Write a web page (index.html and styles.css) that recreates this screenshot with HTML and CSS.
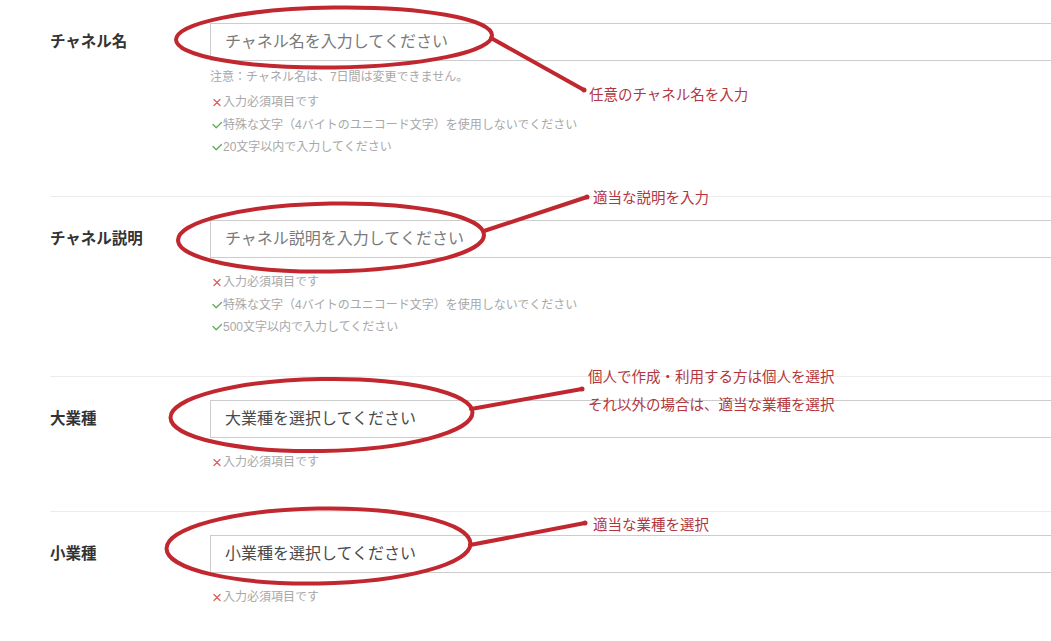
FILE: index.html
```html
<!DOCTYPE html>
<html lang="ja">
<head>
    <meta charset="UTF-8" />
    <meta name="viewport" content="width=device-width, initial-scale=1" />
    <title>チャネル作成</title>
    <link rel="stylesheet" href="styles.css">
</head>
<body>
    <div class="page">
        <form class="channel-form">
            <div class="field">
                <label class="field-label" for="channel-name">チャネル名</label>
                <div class="field-body">
                    <input type="text" id="channel-name" class="text-input" placeholder="チャネル名を入力してください" />
                    <p class="field-note">注意：チャネル名は、7日間は変更できません。</p>
                    <ul class="checks">
                        <li class="ng"><svg class="mark" viewBox="0 0 10 10"><path d="M2 2.5l6 6M8 2.5l-6 6"/></svg>入力必須項目です</li>
                        <li class="ok"><svg class="mark" viewBox="0 0 10 10"><path d="M1 4.5l3.2 3.3L9.5 2.5"/></svg>特殊な文字（4バイトのユニコード文字）を使用しないでください</li>
                        <li class="ok"><svg class="mark" viewBox="0 0 10 10"><path d="M1 4.5l3.2 3.3L9.5 2.5"/></svg>20文字以内で入力してください</li>
                    </ul>
                </div>
            </div>
            <div class="field">
                <label class="field-label" for="channel-desc">チャネル説明</label>
                <div class="field-body">
                    <input type="text" id="channel-desc" class="text-input" placeholder="チャネル説明を入力してください" />
                    <ul class="checks">
                        <li class="ng"><svg class="mark" viewBox="0 0 10 10"><path d="M2 2.5l6 6M8 2.5l-6 6"/></svg>入力必須項目です</li>
                        <li class="ok"><svg class="mark" viewBox="0 0 10 10"><path d="M1 4.5l3.2 3.3L9.5 2.5"/></svg>特殊な文字（4バイトのユニコード文字）を使用しないでください</li>
                        <li class="ok"><svg class="mark" viewBox="0 0 10 10"><path d="M1 4.5l3.2 3.3L9.5 2.5"/></svg>500文字以内で入力してください</li>
                    </ul>
                </div>
            </div>
            <div class="field">
                <label class="field-label">大業種</label>
                <div class="field-body">
                    <div class="select-box">大業種を選択してください</div>
                    <ul class="checks">
                        <li class="ng"><svg class="mark" viewBox="0 0 10 10"><path d="M2 2.5l6 6M8 2.5l-6 6"/></svg>入力必須項目です</li>
                    </ul>
                </div>
            </div>
            <div class="field">
                <label class="field-label">小業種</label>
                <div class="field-body">
                    <div class="select-box">小業種を選択してください</div>
                    <ul class="checks">
                        <li class="ng"><svg class="mark" viewBox="0 0 10 10"><path d="M2 2.5l6 6M8 2.5l-6 6"/></svg>入力必須項目です</li>
                    </ul>
                </div>
            </div>
        </form>

        <!-- hand-drawn annotations on top of the form -->
        <div class="annotations">
            <svg class="marks" viewBox="0 0 1051 641" width="1051" height="641">
                <ellipse cx="334" cy="37.5" rx="158" ry="30" transform="rotate(-0.8 334 37.5)"/>
                <path d="M491 38 L584 90"/>
                <circle cx="584" cy="90" r="2.5"/>

                <ellipse cx="331" cy="237.5" rx="153" ry="34" transform="rotate(-1 331 237.5)"/>
                <path d="M484 231 L587 197"/>
                <circle cx="587" cy="197" r="2.5"/>

                <ellipse cx="321.5" cy="415" rx="151" ry="36" transform="rotate(-1 321.5 415)"/>
                <path d="M471 409 L582 389"/>
                <circle cx="582" cy="389" r="2.5"/>

                <ellipse cx="318.5" cy="546" rx="152" ry="37.5" transform="rotate(-1 318.5 546)"/>
                <path d="M470 545 L585 523"/>
                <circle cx="585" cy="523" r="2.5"/>
            </svg>
            <p class="callout callout-name">任意のチャネル名を入力</p>
            <p class="callout callout-desc">適当な説明を入力</p>
            <p class="callout callout-major">個人で作成・利用する方は個人を選択</p>
            <p class="callout callout-major-2">それ以外の場合は、適当な業種を選択</p>
            <p class="callout callout-minor">適当な業種を選択</p>
        </div>
    </div>
</body>
</html>
```

FILE: styles.css
```css
html, body {
    margin: 0;
    padding: 0;
}
body {
    font-family: "Liberation Sans", "Noto Sans CJK JP", sans-serif;
    background: #fff;
    color: #333;
    overflow: hidden;
}
.page {
    position: relative;
    padding-top: 23px;
    height: 618px;
}
.channel-form {
    margin-left: 50px;
    margin-right: -20px;
}
.field {
    display: flex;
    padding-bottom: 37.5px;
}
.field + .field {
    border-top: 1px solid #ececec;
    padding-top: 23px;
}
.field-label {
    width: 160px;
    flex-shrink: 0;
    font-size: 15.5px;
    font-weight: bold;
    line-height: 38px;
    color: #333;
}
.field-body {
    flex: 1;
}
.text-input,
.select-box {
    display: block;
    width: 100%;
    box-sizing: border-box;
    height: 38px;
    margin: 0;
    padding: 0 14px;
    border: 1px solid #ccc;
    border-radius: 0;
    font-family: inherit;
    font-size: 16px;
    line-height: 36px;
    color: #333;
    outline: none;
}
.text-input::placeholder {
    color: #7a7a7a;
}
.select-box {
    color: #4a4a4a;
}
.field-note {
    margin: 6px 0 0;
    font-size: 12px;
    line-height: 20px;
    color: #a8a8a8;
}
.checks {
    list-style: none;
    margin: 13px 0 0;
    padding: 0;
}
.field-note + .checks {
    margin-top: 4px;
}
.checks li {
    display: flex;
    align-items: center;
    font-size: 12px;
    line-height: 22.5px;
    color: #a8a8a8;
}
.mark {
    width: 10px;
    height: 10px;
    margin: 0 1px 0 2px;
    fill: none;
    stroke-width: 1.3;
    stroke-linecap: round;
    stroke-linejoin: round;
}
.ng .mark {
    stroke: #d9635f;
}
.ok .mark {
    stroke: #5fae55;
}

/* annotations */
.annotations {
    position: absolute;
    top: 0;
    left: 0;
    width: 1051px;
    height: 641px;
    pointer-events: none;
}
.marks {
    position: absolute;
    top: 0;
    left: 0;
}
.marks ellipse,
.marks path {
    fill: none;
    stroke: #c1272f;
    stroke-width: 4;
    stroke-linecap: round;
}
.marks circle {
    fill: #c1272f;
}
.callout {
    position: absolute;
    margin: 0;
    font-size: 14.5px;
    line-height: 20px;
    color: #b3363e;
    white-space: nowrap;
}
.callout-name { left: 589px; top: 85px; }
.callout-desc { left: 593px; top: 188px; }
.callout-major { left: 588px; top: 367px; }
.callout-major-2 { left: 588px; top: 395px; }
.callout-minor { left: 593px; top: 515px; }
```
